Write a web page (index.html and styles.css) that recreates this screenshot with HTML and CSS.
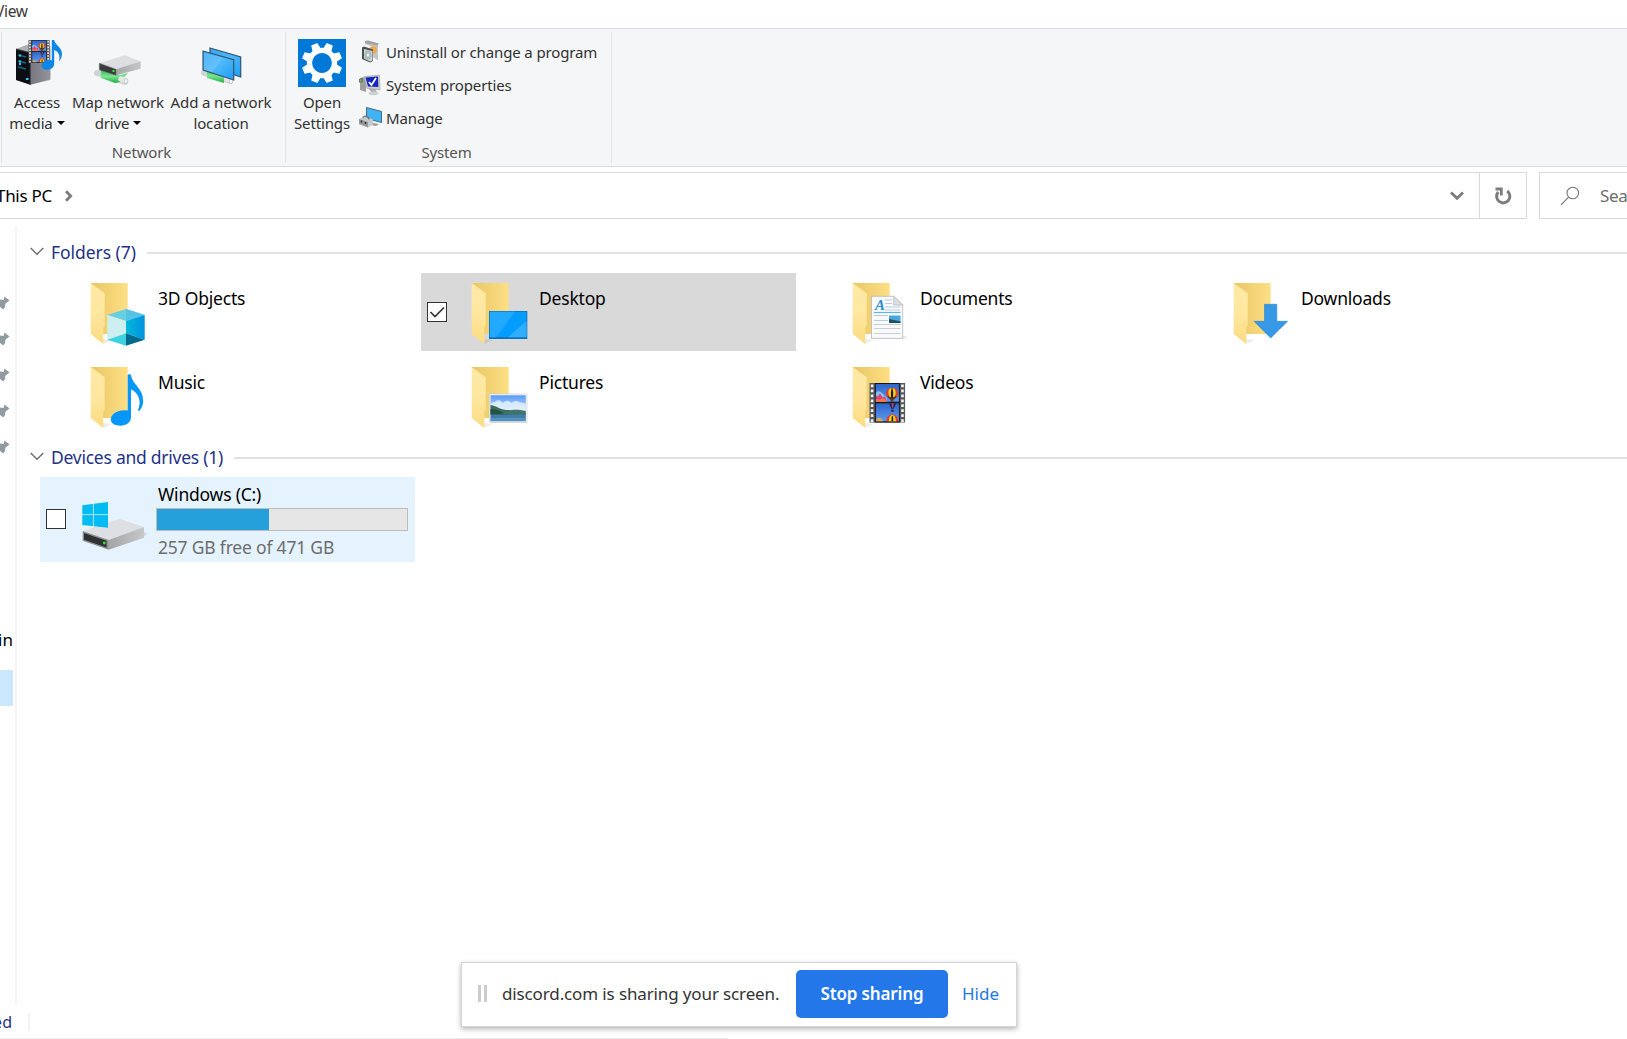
FILE: index.html
```html
<!DOCTYPE html>
<html lang="en">
<head>
<meta charset="utf-8">
<title>This PC</title>
<link rel="stylesheet" href="styles.css">
</head>
<body>
<svg class="defs" width="0" height="0" aria-hidden="true">
  <defs>
    <linearGradient id="back" x1="0" x2="1" y1="0" y2="0"><stop offset="0" stop-color="#e9c663"/><stop offset="1" stop-color="#fddf85"/></linearGradient>
    <linearGradient id="front" x1="0" x2="0" y1="0" y2="1"><stop offset="0" stop-color="#ffe9a6"/><stop offset=".5" stop-color="#ffe7a0"/><stop offset="1" stop-color="#fbdb7f"/></linearGradient>
    <linearGradient id="screen" x1="0" x2="1" y1="0" y2="1"><stop offset="0" stop-color="#35a6f5"/><stop offset=".5" stop-color="#4db8fc"/><stop offset="1" stop-color="#1e9df5"/></linearGradient>
    <linearGradient id="cubeR" x1="0" x2="1" y1="0" y2="0"><stop offset="0" stop-color="#00b7dc"/><stop offset="1" stop-color="#0092de"/></linearGradient>
    <linearGradient id="side" x1="0" x2="1" y1="0" y2="0"><stop offset="0" stop-color="#a4a5a7"/><stop offset="1" stop-color="#c6c7c9"/></linearGradient>
    <linearGradient id="sky" x1="0" x2="0" y1="0" y2="1"><stop offset="0" stop-color="#5a9bf5"/><stop offset="1" stop-color="#d5ecfb"/></linearGradient>
    <linearGradient id="film" x1="0" x2="0" y1="0" y2="1"><stop offset="0" stop-color="#2f64c8"/><stop offset="1" stop-color="#5d9bee"/></linearGradient>
    <linearGradient id="green" x1="0" x2="0" y1="0" y2="1"><stop offset="0" stop-color="#2fc45a"/><stop offset=".5" stop-color="#7be48f"/><stop offset="1" stop-color="#22ad48"/></linearGradient>
    <linearGradient id="case" x1="0" x2="1" y1="0" y2="0"><stop offset="0" stop-color="#77787f"/><stop offset="1" stop-color="#94959c"/></linearGradient>
    <symbol id="folder" viewBox="0 0 64 72">
      <path d="M15 60 L24 61 L15.3 65Z" fill="#000" opacity=".07"/>
      <path d="M2.700 4H39.700V55H12Z" fill="url(#back)"/>
      <path d="M2.700 4 16.700 14.300V46.700L15.300 48.300V65L2.700 55Z" fill="url(#front)"/>
    </symbol>
    <symbol id="balloon" viewBox="0 0 14 16">
      <path d="M7 0C2.600 0 0 3 0 6c0 3 3 5.500 5 7.500h4C11 11.500 14 9 14 6c0-3-2.600-6-7-6Z" fill="#e93a24"/>
      <path d="M4.500 .6C1.500 4 3 9 5.500 13h3C11 9 12.500 4 9.500 .6Z" fill="#f8d21c"/>
      <path d="M7 0C5.300 3 5.300 9 6.500 13h1C8.700 9 8.700 3 7 0Z" fill="#1c1c1c"/>
      <path d="M1 9C5 11 9 11 13 9L9 13.500H5Z" fill="#222" opacity=".75"/>
      <path d="M5.500 14h3v2h-3Z" fill="#563d16"/>
    </symbol>
    <symbol id="strip" viewBox="0 0 36 40" preserveAspectRatio="none">
      <rect width="36" height="40" fill="#595a5c"/>
      <path d="M2.800 1.500V40M33.200 1.500V40" stroke="#f2f2f2" stroke-width="2.600" stroke-dasharray="2.800 2.200"/>
      <rect x="5.500" width="25" height="40" fill="#17181b"/>
      <rect x="6.600" y="1" width="23" height="17.800" fill="url(#film)"/>
      <rect x="6.600" y="20.500" width="23" height="18" fill="url(#film)"/>
      <path d="M6.600 10c3-4 6 0 9 3l2 2v3.800h-11Z" fill="#7fc5ef"/>
      <path d="M6.600 12.500l2 1 2-3 3 4 2-1 2 5.300h-11Z" fill="#e0407c"/>
      <path d="M6.600 16l4 1 3-2 4 3.800h-11Z" fill="#f0803c"/>
      <path d="M7 37c2-3 4-2 6 0l1 1.500H7Z" fill="#e8a54c"/>
      <path d="M20 20.500h6.500c0 2-1.500 4-2.300 5.500h-2c-.7-1.500-2.200-3.500-2.200-5.500Z" fill="#2b2040"/><path d="M22 20.500h2.500l-.7 4.500h-1Z" fill="#a54c8c"/><path d="M22 27h2.200v2H22Z" fill="#2b2040"/>
      <use href="#balloon" x="16.500" y="5" width="12.500" height="14"/>
      <path d="M17 38.500c0-9 12-9 12 0Z" fill="#e93a24"/><path d="M19.500 38.500c0-8.500 7-8.500 7 0Z" fill="#f8d21c"/><path d="M22.300 38.500c-.5-7.500 2-7.500 1.600 0Z" fill="#1c1c1c"/>
    </symbol>
    <symbol id="pin" viewBox="0 0 10 16"><path d="M4.500 1.500 9.500 5.500 5.500 8.500 4.800 12.500 3 14.500 1.500 13 0 12V4.500L3.500 5Z" fill="#8f9aa1"/></symbol>
  </defs>
</svg>

<div class="window">
  <div class="tabs"><span class="tab">View</span></div>

  <div class="ribbon">
    <section class="group network">
      <div class="tools">
        <div class="tool access">
          <svg class="big" width="52" height="50" viewBox="0 0 52 50">
            <path d="M3 11 16 6 37.300 8V42L17.300 46.700 3 42Z" fill="#aeb0b5"/>
            <path d="M17.300 14.700 37.300 11V41.300L17.300 46.700Z" fill="url(#case)"/>
            <path d="M3 11 17.300 14.700V46.700L3 42Z" fill="#0c0e13"/>
            <path d="M3 11 17.300 14.700V46.700" fill="none" stroke="#3d4048"/>
            <path d="M5 17l8 2M5 23l8 2M5 29l8 2" stroke="#176488" stroke-width="1.300"/>
            <path d="M6 17.500h2M6 23.500h2M6 26h2M13 41h2.500" stroke="#2bd3fb" stroke-width="2"/>
            <use href="#strip" x="15.300" y="2" width="21.500" height="23"/>
            <path d="M38.800 2h2.400c.5 5 7.800 7 7.800 14 0 3-1.500 6-3 7.500 1.500-6-.5-10-4.800-11.500V26c0 3.500-3.300 5.700-7 5.700-3.200 0-5.700-1.500-5.700-4.200 0-4 5.500-6.500 10.300-5Z" fill="#0c87e8"/>
          </svg>
          <span>Access</span><span>media<i class="caret"></i></span>
        </div>
        <div class="tool map">
          <svg class="big" width="52" height="50" viewBox="0 -4 52 50">
            <path d="M4 31l28 9" stroke="#cfd2d4" stroke-width="6" stroke-linecap="round"/>
            <path d="M8 28 27 33 35 31 27 40 22 41 8 36Z" fill="url(#green)"/>
            <path d="M28 37l4 1.500" stroke="#e4e6e7" stroke-width="5.500" stroke-linecap="round"/><ellipse cx="33" cy="39" rx="1.800" ry="2.600" fill="#f6f6f6" stroke="#b5b8ba" stroke-width=".7"/>
            <path d="M6.300 21.300 31.700 13.300 47.700 19.300 23 27.300Z" fill="#dddee1"/>
            <path d="M23 27.300 47.700 19.300V26.700L23 33.300Z" fill="url(#side)"/>
            <path d="M6.300 21.300 23 27.300V33.300L6.300 28Z" fill="#393b3c" stroke="#6f7173" stroke-width=".6"/>
            <rect x="19.500" y="28" width="2" height="2" fill="#37e936"/>
          </svg>
          <span>Map network</span><span>drive<i class="caret"></i></span>
        </div>
        <div class="tool add">
          <svg class="big" width="48" height="50" viewBox="0 -4 48 50">
            <path d="M5 31l26 8" stroke="#cfd2d4" stroke-width="6" stroke-linecap="round"/>
            <path d="M8 27 25 33V41L8 36Z" fill="url(#green)"/>
            <path d="M28 37l3 1" stroke="#e4e6e7" stroke-width="5.500" stroke-linecap="round"/><ellipse cx="32" cy="39" rx="1.800" ry="2.600" fill="#f6f6f6" stroke="#b5b8ba" stroke-width=".7"/>
            <path d="M11 6 41.700 15V35L11 24.700Z" fill="url(#screen)" stroke="#34566c" stroke-width="1.200"/>
            <path d="M4 9 34.700 17.700V38L4 28Z" fill="url(#screen)" stroke="#34566c" stroke-width="1.200"/>
            <path d="M5 10.500 24 16 13 30 5 27.500Z" fill="#fff" opacity=".14"/>
          </svg>
          <span>Add a network</span><span>location</span>
        </div>
      </div>
      <div class="caption">Network</div>
    </section>
    <section class="group system">
      <div class="tools">
        <div class="tool open">
          <svg class="gear" width="48" height="48" viewBox="0 0 48 48">
            <rect width="48" height="48" fill="#0078d7"/>
            <g transform="translate(24 24) rotate(22.500)" fill="#fff">
              <path id="tooth" d="M-4.500-13-3.300-20.200H3.300L4.500-13Z"/>
              <use href="#tooth" transform="rotate(45)"/><use href="#tooth" transform="rotate(90)"/><use href="#tooth" transform="rotate(135)"/><use href="#tooth" transform="rotate(180)"/><use href="#tooth" transform="rotate(225)"/><use href="#tooth" transform="rotate(270)"/><use href="#tooth" transform="rotate(315)"/>
              <circle r="12.500" fill="none" stroke="#fff" stroke-width="5.200"/>
            </g>
          </svg>
          <span>Open</span><span>Settings</span>
        </div>
        <ul class="links">
          <li><svg width="24" height="24" viewBox="0 0 24 24">
            <path d="M6 2 19 5V20.500L14 17V7L6 4Z" fill="#c3c5c4"/><path d="M6 1 9 .5 20 3.500 18.500 5.500 6 3Z" fill="#9fa2a1"/>
            <circle cx="14" cy="10" r="3.800" fill="#f3a74c"/><path d="M3 7.500 5 6.500 14 9.500V21L11 22.500 3 19Z" fill="#4b5051"/><path d="M5 9 13.500 11V20.500L11 21.500 5 18.500Z" fill="#cfd6d6"/>
            <ellipse cx="9" cy="15" rx="3.600" ry="4.800" fill="#a9bcc0"/><ellipse cx="9" cy="15" rx="1.200" ry="1.500" fill="#fff"/>
          </svg><span>Uninstall or change a program</span></li>
          <li><svg width="24" height="24" viewBox="0 0 24 24">
            <path d="M1 5 7 4V19L1 17Z" fill="#9da09f"/><path d="M0 6l4-1.500v5H0Z" fill="#6e7471"/><rect x="1" y="6.500" width="1.500" height="2" fill="#47d94b"/>
            <path d="M9 15l4 5 5-1-3-4Z" fill="#aeb1b0"/><ellipse cx="14.500" cy="20.300" rx="5" ry="1.900" fill="#cfd1d0"/>
            <path d="M5 3.500 20.500 2 21 17 8 15.500Z" fill="#c9cccb" stroke="#8f9392" stroke-width=".5"/>
            <path d="M6.500 4.500 19 3.500 19.300 14 9 13.500Z" fill="#1426bd"/><path d="M10 9l2.500 3L17 5" fill="none" stroke="#fff" stroke-width="1.800"/>
          </svg><span>System properties</span></li>
          <li><svg width="24" height="24" viewBox="0 0 24 24">
            <path d="M7.500 1.500 22.500 5.500V16.500L7.500 12.500Z" fill="#42b3f2" stroke="#3a6d87"/><path d="M14 17l6 1-3 2-5-1Z" fill="#999"/>
            <path d="M0 13 6 10.500 14 13.500V18.500L9 21.500 0 18Z" fill="#c6c9cb"/><path d="M0 13 9 16V21.500L0 18Z" fill="#95999c"/><path d="M4 12c0-3 6-2 6 1.500" fill="none" stroke="#707477" stroke-width="1.200"/><path d="M2.500 14.500v2M6.500 16v2" stroke="#303335" stroke-width="1.500"/>
          </svg><span>Manage</span></li>
        </ul>
      </div>
      <div class="caption">System</div>
    </section>
  </div>

  <div class="addressrow">
    <div class="address">
      <span class="crumb">This PC</span>
      <svg class="chev" width="10" height="14" viewBox="0 0 10 14"><path d="M2 2.200 6.700 7 2 11.800" fill="none" stroke="#7c7c7c" stroke-width="2.800"/></svg>
      <svg class="drop" width="16" height="12" viewBox="0 0 16 12"><path d="M2 2.500 8 8.200 14 2.500" fill="none" stroke="#7c7c7c" stroke-width="2.800"/></svg>
      <div class="refresh"><svg width="18" height="18" viewBox="0 0 18 18"><path d="M4.200 5A6.600 6.600 0 1 0 13.200 4" fill="none" stroke="#7c7c7c" stroke-width="3"/><path d="M1.500 2H7.300V8.500" fill="none" stroke="#7c7c7c" stroke-width="2.800"/></svg></div>
    </div>
    <div class="search">
      <svg width="20" height="20" viewBox="0 0 20 20"><circle cx="12.800" cy="7" r="5.800" fill="none" stroke="#76747c" stroke-width="1.100"/><path d="M8.600 11.200 1 18.800" stroke="#76747c" stroke-width="1.200"/></svg>
      <span>Search This PC</span>
    </div>
  </div>

  <div class="main">
    <nav class="nav">
      <div class="pins">
        <svg><use href="#pin"/></svg>
        <svg><use href="#pin"/></svg>
        <svg><use href="#pin"/></svg>
        <svg><use href="#pin"/></svg>
        <svg><use href="#pin"/></svg>
      </div>
      <div class="navtext">in</div>
      <div class="navsel"></div>
    </nav>
    <div class="content">
      <div class="header first"><svg width="14" height="9" viewBox="0 0 14 9"><path d="M.7 1 7 7.300 13.300 1" fill="none" stroke="#6b6b6b" stroke-width="1.300"/></svg><span>Folders (7)</span><hr></div>
      <div class="grid">
        <div class="tile"><svg class="icon" width="64" height="72" viewBox="0 0 64 72"><use href="#folder"/>
          <path d="M19.300 36 38 30 56.700 36 38 42Z" fill="#66d0e0"/><path d="M38 30 56.700 36 38 42Z" fill="#56c3e6"/>
          <path d="M19.300 36 38 42V54.300L19.300 60.700Z" fill="#cdeff1"/><path d="M38 42 56.700 36V60.700L38 54.300Z" fill="url(#cubeR)"/>
          <path d="M19.300 60.700 38 54.300V66.700Z" fill="#3dd2df"/><path d="M38 54.300 56.700 60.700 38 66.700Z" fill="#006a8c"/></svg><span>3D Objects</span></div>
        <div class="tile selected"><span class="check"><svg width="18" height="18" viewBox="0 0 18 18"><path d="M2.500 9 7 13.500 16 4.500" fill="none" stroke="#333" stroke-width="1.700"/></svg></span><svg class="icon" width="64" height="72" viewBox="0 0 64 72"><use href="#folder"/>
          <path d="M20 32H58.300V60H20Z" fill="#0d6fb5"/><path d="M20.800 32.800H57.500V58.300H20.800Z" fill="#059cff"/><path d="M20.800 32.800H46L27 58.300H20.800Z" fill="#21a8ff"/><path d="M57.500 42V58.300H39Z" fill="#31adff"/></svg><span>Desktop</span></div>
        <div class="tile"><svg class="icon" width="64" height="72" viewBox="0 0 64 72"><use href="#folder"/>
          <path d="M53 57l5 1-5 2Z" fill="#000" opacity=".1"/>
          <path d="M21.500 17.300H43.700L52.700 26V59.400H21.500Z" fill="#f9fafb" stroke="#b4b7ba" stroke-width=".8"/><path d="M43.700 17.300V26H52.700Z" fill="#dde0e3" stroke="#a7aaad" stroke-width=".6"/>
          <path d="M35 21h7M35 24.500h7M35 28h15.500M24 36.500h14M24 41.500h14" stroke="#b6cde0" stroke-width="1"/><path d="M35 31h15.500M24 45.500h26.500M24 49.500h26.500M24 54.500h26.500" stroke="#c9ced3" stroke-width="1"/><path d="M24 33.500h26.500" stroke="#5bb5e8" stroke-width="1.200"/>
          <path d="M39 36.500H50.500V44H39Z" fill="#4ba5dc"/><path d="M39 40l5 1 6.500 1.500V44H39Z" fill="#1c5260"/>
          <text x="25" y="30.800" class="letter">A</text></svg><span>Documents</span></div>
        <div class="tile"><svg class="icon" width="64" height="72" viewBox="0 0 64 72"><use href="#folder"/><path d="M33.500 25.300H45.800V42.300H56.500L39.700 59 23 42.300H33.500Z" fill="#3798e8" stroke="#2583cf" stroke-width=".6"/></svg><span>Downloads</span></div>
        <div class="tile"><svg class="icon" width="64" height="72" viewBox="0 0 64 72"><use href="#folder"/><path d="M39.700 12c0-1 3-1 3.300 0 1.500 10 12.200 13 12.200 26 0 4-1.700 7.500-3.700 9.700-.5.300-1.700 0-1.500-.500C54.500 37 49 28.500 43 26.500V54c0 5.500-5 8.700-10.500 8.700-6 0-9.700-2.700-9.700-6.200 0-5.500 7-10.500 16.900-9Z" fill="#0797f8"/></svg><span>Music</span></div>
        <div class="tile"><svg class="icon" width="64" height="72" viewBox="0 0 64 72"><use href="#folder"/>
          <path d="M20.300 31H58V59.500H20.300Z" fill="#fbfbfb" stroke="#c9cbcc" stroke-width=".7"/><path d="M21.500 32.300H56.800V51.500H21.500Z" fill="url(#sky)"/><path d="M22 41c2-3 4-1 5-3 3-2 5 0 7 2 3-3 6-3 8 0 3-2 6-3 8-1 2 1 4 0 6.800 2V49H22Z" fill="#e8f4fc" opacity=".8"/>
          <path d="M21.500 42c7 1 10 5 16 5s9 2 19.300 4v1H21.500Z" fill="#3d6d58"/><path d="M21.500 46c9 0 12 5 20 5.700H21.500Z" fill="#24523d"/><path d="M33 51c8-5 14-5 23.800-3v4Z" fill="#3f7469"/><path d="M21.500 51.500H56.800V58.300H21.500Z" fill="#3f7cad"/><path d="M21.500 55H56.800V58.300H21.500Z" fill="#6ea5cc" opacity=".5"/></svg><span>Pictures</span></div>
        <div class="tile"><svg class="icon" width="64" height="72" viewBox="0 0 64 72"><use href="#folder"/><use href="#strip" x="19.300" y="20" width="36" height="39.700"/></svg><span>Videos</span></div>
      </div>
      <div class="header second"><svg width="14" height="9" viewBox="0 0 14 9"><path d="M.7 1 7 7.300 13.300 1" fill="none" stroke="#6b6b6b" stroke-width="1.300"/></svg><span>Devices and drives (1)</span><hr></div>
      <div class="drive">
        <span class="check"></span>
        <svg class="driveicon" width="72" height="56" viewBox="0 0 72 56">
          <path d="M64 33l4 1.500-4 3Z" fill="#000" opacity=".1"/>
          <path d="M2.700 32 39.300 19.700 64 28 28.700 41Z" fill="#dedfe2"/><path d="M28.700 41 64 28V38.700L28.700 50.700Z" fill="url(#side)"/>
          <path d="M2.700 32 28.700 41V50.700L2.700 41.700Z" fill="#8d8e90"/><path d="M4 34 26.500 41.700V48.500L4 40.700Z" fill="#2f3132"/><circle cx="24.300" cy="44" r="1.400" fill="#2be82c"/>
          <path d="M2.300 6.300 28 3V28.700L2.300 26Z" fill="#00bcf2"/><path d="M13.400 4V28M2 15.600H28" stroke="#d9f3fe" stroke-width=".8"/>
        </svg>
        <div class="driveinfo">
          <span class="dname">Windows (C:)</span>
          <div class="bar"><div class="fill" style="width:44.800%"></div></div>
          <span class="free">257 GB free of 471 GB</span>
        </div>
      </div>
    </div>
  </div>
  <div class="status"><span>selected</span></div>

  <div class="share">
    <i class="grip"></i>
    <span class="msg">discord.com is sharing your screen.</span>
    <button class="stop">Stop sharing</button>
    <a class="hide">Hide</a>
  </div>
</div>
</body>
</html>
```
FILE: styles.css
```css
* { box-sizing: border-box; }
body { margin: 0; background: #fff; font-family: "Noto Sans", "Open Sans", sans-serif; color: #000; }
.defs { position: absolute; }
svg { display: block; flex: none; }
span { white-space: nowrap; }
.window { position: relative; width: 1627px; height: 1039px; overflow: hidden; display: flex; flex-direction: column; }

.tabs { height: 28px; flex: none; }
.tab { display: block; margin-left: -5px; font-size: 15.500px; line-height: 23px; letter-spacing: -.3px; color: #3a3a3a; }

.ribbon { height: 139px; flex: none; display: flex; background: #f5f6f7; border-top: 1px solid #dadbdc; border-bottom: 1px solid #dadbdc; padding-top: 3px; padding-left: 1px; font-size: 15px; letter-spacing: -.13px; color: #323232; }
.group { height: 131px; border-right: 1px solid #e2e3e4; display: flex; flex-direction: column; justify-content: space-between; }
.network { width: 285px; border-left: 1px solid #e2e3e4; }
.system { width: 326px; }
.tools { display: flex; }
.tool { display: flex; flex-direction: column; align-items: center; line-height: 21px; padding-top: 6px; }
.big { margin-bottom: 4px; }
.access { width: 70px; }
.access .big { margin-left: 3px; }
.map { width: 92px; }
.map .big { margin-left: 2px; }
.add { width: 114px; }
.add .big { margin-left: 3px; }
.open { width: 72px; padding-top: 7px; }
.gear { margin-bottom: 5px; }
.caret { display: inline-block; border: 4px solid transparent; border-top-color: #000; border-bottom: 0; margin-left: 4px; vertical-align: 4px; }
.links { list-style: none; margin: 3px 0 0 1px; padding: 0; }
.links li { display: flex; align-items: center; height: 33px; gap: 3px; }
.caption { text-align: center; line-height: 20px; height: 21px; color: #555; padding-right: 4px; }

.addressrow { height: 52px; flex: none; display: flex; padding-top: 5px; gap: 12px; }
.address { width: 1527px; height: 47px; border: 1px solid #d9d9d9; border-left: 0; display: flex; align-items: center; }
.crumb { margin-left: -4px; font-size: 17px; letter-spacing: -.3px; }
.chev { margin-left: 12px; }
.drop { margin-left: auto; margin-right: 14px; }
.refresh { width: 47px; height: 45px; border-left: 1px solid #d9d9d9; display: flex; align-items: center; justify-content: center; }
.search { width: 88px; height: 47px; border: 1px solid #d9d9d9; border-right: 0; padding-left: 20px; display: flex; align-items: center; gap: 20px; overflow: hidden; font-size: 17px; letter-spacing: -.3px; color: #6d6d6d; }

.main { flex: 1; display: flex; padding-top: 7px; min-height: 0; }
.nav { width: 17px; flex: none; height: 778px; border-right: 2px solid #f5f5f5; }
.pins { padding-top: 69px; display: flex; flex-direction: column; gap: 20px; }
.pins svg { width: 10px; height: 16px; }
.navtext { margin-top: 173px; margin-left: -2px; font-size: 17px; line-height: 24px; }
.navsel { margin-top: 18px; width: 13px; height: 36px; background: #cce8ff; }
.content { flex: 1; }
.header { display: flex; align-items: center; height: 28px; padding-left: 13px; color: #1e3287; font-size: 17.500px; letter-spacing: -.25px; }
.header svg { margin-top: -2px; }
.header span { margin-left: 7px; }
.header hr { flex: 1; height: 2px; border: 0; margin: 1px 0 0 11px; background: #e2e2e2; }
.first { margin-top: 12px; }
.first span { letter-spacing: -.05px; }
.grid { display: grid; grid-template-columns: repeat(4, 375px); column-gap: 6px; row-gap: 6px; padding: 7px 0 0 23px; }
.tile { height: 78px; display: flex; padding: 7px 0 0 48px; font-size: 17.500px; letter-spacing: -.2px; line-height: 24px; }
.tile .icon { margin-top: -1px; }
.tile > span:last-child { margin: 6px 0 0 6px; }
.selected { background: #d9d9d9; padding-left: 6px; }
.check { width: 20px; height: 20px; flex: none; border: 1px solid #333; background: #fff; }
.selected .check { margin: 22px 22px 0 0; }
.letter { font: italic bold 15px "Liberation Serif", serif; fill: #2d8fd0; }
.second { margin-top: 8px; }
.drive { width: 375px; height: 85px; margin: 6px 0 0 23px; background: #e5f3ff; display: flex; align-items: flex-start; }
.drive .check { margin: 32px 0 0 6px; }
.driveicon { margin: 22px 0 0 14px; }
.driveinfo { display: flex; flex-direction: column; margin-left: 4px; font-size: 17.500px; letter-spacing: -.2px; }
.driveinfo span { padding-left: 2px; line-height: 24px; }
.dname { margin-top: 5px; }
.bar { width: 252px; height: 23px; border: 1px solid #bcbcbc; background: #e6e6e6; margin: 2px 0 4px; }
.fill { height: 100%; background: #26a0da; }
.free { color: #6d6d6d; }

.status { height: 32px; flex: none; display: flex; padding-top: 6px; position: relative; }
.status span { width: 30px; height: 18px; overflow: hidden; border-right: 2px solid #f3f3f3; padding-right: 16px; font-size: 16px; line-height: 18px; direction: rtl; color: #1e3287; }
.status::after { content: ""; position: absolute; left: 0; bottom: 0; width: 728px; height: 1px; background: #eee; }

.share { position: absolute; left: 461px; top: 962px; width: 556px; height: 65px; background: #fff; border: 1px solid #d5d5d5; box-shadow: 0 2px 5px rgba(0,0,0,.3); display: flex; align-items: center; padding-bottom: 2px; }
.grip { width: 9px; height: 17px; margin-left: 16px; border: solid #ccc; border-width: 0 3px; }
.msg { width: 279px; margin-left: 15px; font-size: 17px; letter-spacing: -.13px; color: #333; }
.stop { width: 152px; height: 48px; margin-left: 15px; padding: 0; border: 0; border-radius: 5px; background: #2377e8; color: #fff; font: 600 17px "Noto Sans", sans-serif; letter-spacing: -.15px; }
.hide { margin-left: 14px; font-size: 17px; color: #2377e8; }
```
